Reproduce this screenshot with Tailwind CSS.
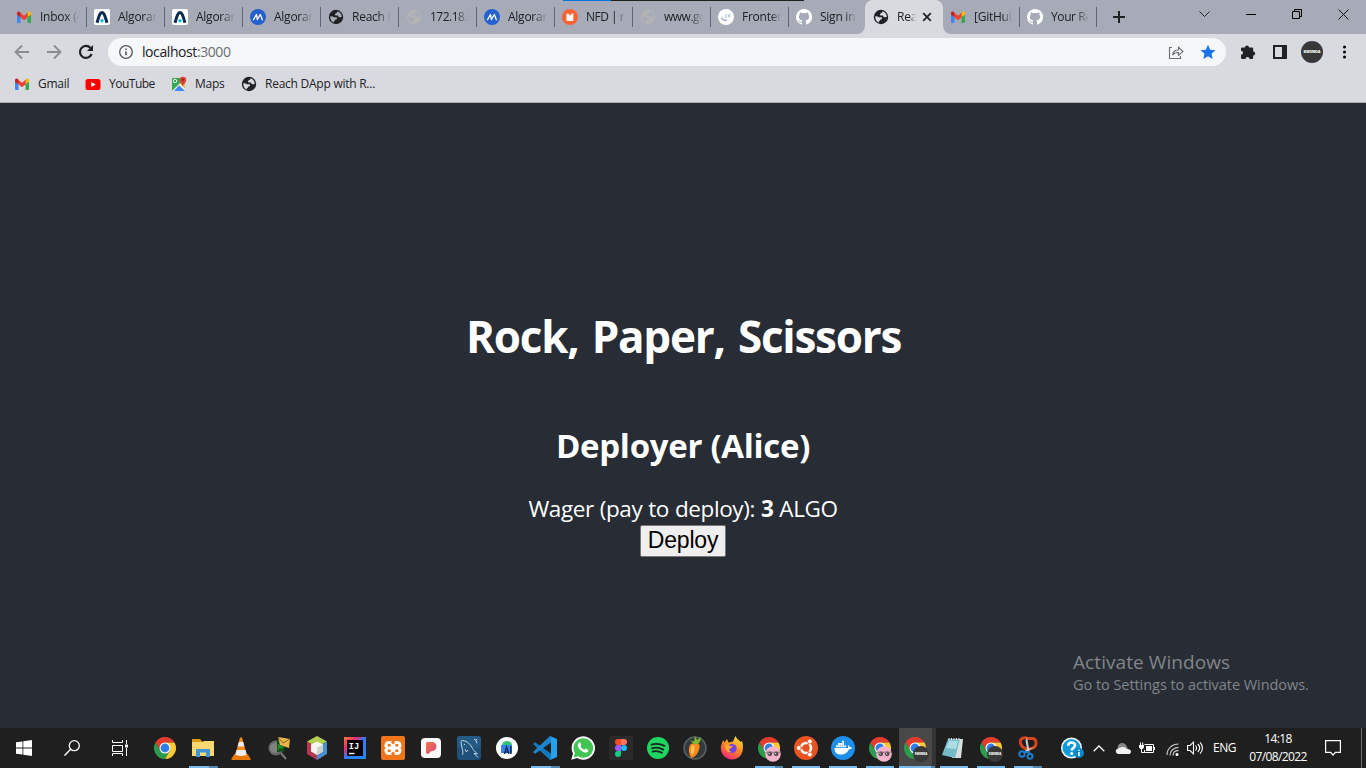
<!DOCTYPE html>
<html lang="en">
<head>
<meta charset="utf-8">
<title>Reach DApp with React</title>
<script src="https://cdn.jsdelivr.net/npm/@tailwindcss/browser@4"></script>
</head>
<body class="w-[1366px] h-[768px] overflow-hidden flex flex-col bg-[#282c34] font-['Open_Sans',sans-serif] text-[#202124]">

<svg class="hidden">
  <symbol id="gmail" viewBox="0 0 16 12"><path fill="#4285f4" d="M1 2v9a1 1 0 0 0 1 1h2.500V5z"/><path fill="#34a853" d="M15 2v9a1 1 0 0 1-1 1h-2.500V5z"/><path fill="#ea4335" d="M4 1.600 8 4.800l4-3.200V6L8 9.200 4 6z"/><path fill="#c5221f" d="M1 2.200C1 .6 2.800 0 4.300 1.300V6L1 3.700z"/><path fill="#fbbc04" d="M15 2.200C15 .6 13.200 0 11.700 1.300V6L15 3.700z"/></symbol>
  <symbol id="globe" viewBox="0 0 16 16"><circle cx="8" cy="8" r="7.200" fill="currentColor"/><path fill="var(--land)" d="M2.300 7.300C3.500 7 5 7.300 6 8.200h2.300c1 .2 1 1.800 0 2.200l-1 .2c-.2 1-.5 1.600-1.500 1.800v1.300C3.600 12.800 2 10.500 2.300 7.300zM9.300 2.300C9.600 3.500 9 4 7.800 4.200 7 4.500 6.700 6 7.500 6.500h2.300c.6 1.500 1.500 2 2.200 1.800l1.800-.3c0-2.800-1.800-5-4.500-5.700z"/></symbol>
  <symbol id="algo" viewBox="0 0 16 16"><rect width="16" height="16" rx="2" fill="#fff"/><path d="M3 13.800C4.500 9 5.500 3.500 8 3.500s3.500 5.500 5 10.300" fill="none" stroke="#0d2a4f" stroke-width="3"/><circle cx="8" cy="11.700" r="1.700" fill="#18b6e8"/></symbol>
  <symbol id="myalgo" viewBox="0 0 16 16"><circle cx="8" cy="8" r="8" fill="#2560cf"/><path d="M3.500 10.800 6.500 5.500l.9 5 2.900-5 2 5.300M7.300 10.600l1-1.700" fill="none" stroke="#fff" stroke-width="1.300" stroke-linejoin="round" stroke-linecap="round"/></symbol>
  <symbol id="github" viewBox="0 0 16 16"><path fill="#fff" d="M8 0a8 8 0 0 0-2.530 15.590c.4.070.550-.170.550-.380v-1.490C3.800 14.200 3.330 12.800 3.330 12.800c-.360-.920-.890-1.170-.890-1.170-.730-.500.050-.490.050-.490.800.060 1.230.820 1.230.820.710 1.220 1.870.870 2.330.660.070-.520.280-.870.510-1.070-1.780-.200-3.640-.890-3.640-3.950 0-.870.310-1.590.820-2.150-.080-.200-.360-1.020.080-2.120 0 0 .670-.210 2.200.820a7.600 7.600 0 0 1 4 0c1.530-1.040 2.200-.820 2.200-.820.440 1.100.160 1.920.080 2.120.510.560.820 1.270.820 2.150 0 3.070-1.870 3.750-3.650 3.950.290.250.540.730.540 1.480v2.200c0 .210.150.460.550.380A8 8 0 0 0 8 0z"/></symbol>
  <symbol id="chrome" viewBox="0 0 24 24"><path fill="#e33b2e" d="M2.470 6.500A11 11 0 0 1 21.530 6.500H12L7.240 14.750z"/><path fill="#2b9c4a" d="M2.470 6.500 7.240 14.750 12 17.500l4.760-2.750L12 23A11 11 0 0 1 2.470 6.500z"/><path fill="#fcc934" d="M21.530 6.500A11 11 0 0 1 12 23l4.760-8.250L12 6.500z"/><circle cx="12" cy="12" r="5.500" fill="#fff"/><circle cx="12" cy="12" r="4.400" fill="#2f7de9"/></symbol>
  <symbol id="pinkface" viewBox="0 0 16 16"><circle cx="8" cy="8" r="7.800" fill="#f4b3cd"/><circle cx="4.800" cy="7.800" r="2.400" fill="#54474c"/><circle cx="11.200" cy="7.800" r="2.400" fill="#54474c"/><path d="M3.500 6.500l1 2M10 6.500l1 2" stroke="#ddd" stroke-width="1"/><path d="M1 6.200h14" stroke="#76636b" stroke-width=".8"/></symbol>
  <symbol id="avatar" viewBox="0 0 22 22"><circle cx="11" cy="11" r="11" fill="#383838"/><text x="11" y="11.800" text-anchor="middle" font-size="4.200" font-weight="800" fill="#fff" textLength="17" lengthAdjust="spacingAndGlyphs">KWENDA</text></symbol>
</svg>

<!-- Tab strip -->
<div class="relative h-[34px] shrink-0 bg-[#a6abb7] flex text-[12px] leading-[34px] tracking-[-0.25px] pl-2">
  <div class="absolute top-0 left-[563px] w-[48px] h-px bg-[#0078d7]"></div>
  <div class="absolute top-0 left-[611px] w-[193px] h-px bg-[#1f1f1f]"></div>

  <div class="w-[78px] shrink-0 flex items-center pl-2"><svg class="w-4 h-3 shrink-0"><use href="#gmail"/></svg><span class="ml-2 w-[39px] overflow-hidden whitespace-nowrap mask-r-from-65%">Inbox (4</span><i class="ml-auto -mr-px z-10 w-px h-5 bg-[#63666e]"></i></div>
  <div class="w-[78px] shrink-0 flex items-center pl-2"><svg class="w-4 h-4 shrink-0"><use href="#algo"/></svg><span class="ml-2 w-[39px] overflow-hidden whitespace-nowrap mask-r-from-65%">Algorand</span><i class="ml-auto -mr-px z-10 w-px h-5 bg-[#63666e]"></i></div>
  <div class="w-[78px] shrink-0 flex items-center pl-2"><svg class="w-4 h-4 shrink-0"><use href="#algo"/></svg><span class="ml-2 w-[39px] overflow-hidden whitespace-nowrap mask-r-from-65%">Algorand</span><i class="ml-auto -mr-px z-10 w-px h-5 bg-[#63666e]"></i></div>
  <div class="w-[78px] shrink-0 flex items-center pl-2"><svg class="w-4 h-4 shrink-0"><use href="#myalgo"/></svg><span class="ml-2 w-[39px] overflow-hidden whitespace-nowrap mask-r-from-65%">Algorand</span><i class="ml-auto -mr-px z-10 w-px h-5 bg-[#63666e]"></i></div>
  <div class="w-[78px] shrink-0 flex items-center pl-2"><svg class="w-4 h-4 shrink-0 [--land:#a6abb7]"><use href="#globe"/></svg><span class="ml-2 w-[39px] overflow-hidden whitespace-nowrap mask-r-from-65%">Reach D</span><i class="ml-auto -mr-px z-10 w-px h-5 bg-[#63666e]"></i></div>
  <div class="w-[78px] shrink-0 flex items-center pl-2"><svg class="w-4 h-4 shrink-0 text-[#b4b4b5] [--land:#a6abb7]"><use href="#globe"/></svg><span class="ml-2 w-[39px] overflow-hidden whitespace-nowrap mask-r-from-65% tracking-[-0.5px]">172.18.0</span><i class="ml-auto -mr-px z-10 w-px h-5 bg-[#63666e]"></i></div>
  <div class="w-[78px] shrink-0 flex items-center pl-2"><svg class="w-4 h-4 shrink-0"><use href="#myalgo"/></svg><span class="ml-2 w-[39px] overflow-hidden whitespace-nowrap mask-r-from-65%">Algorand</span><i class="ml-auto -mr-px z-10 w-px h-5 bg-[#63666e]"></i></div>
  <div class="w-[78px] shrink-0 flex items-center pl-2"><svg class="w-4 h-4 shrink-0" viewBox="0 0 16 16"><circle cx="8" cy="8" r="8" fill="#fb6232"/><path fill="#fff" d="M4.500 5l1.500-.7L8.500 7V5.600l2.800-1.300V12H4.500z"/></svg><span class="ml-2 w-[39px] overflow-hidden whitespace-nowrap mask-r-from-75% tracking-[-0.5px]">NFD | m</span><i class="ml-auto -mr-px z-10 w-px h-5 bg-[#63666e]"></i></div>
  <div class="w-[78px] shrink-0 flex items-center pl-2"><svg class="w-4 h-4 shrink-0 text-[#b4b4b5] [--land:#a6abb7]"><use href="#globe"/></svg><span class="ml-2 w-[39px] overflow-hidden whitespace-nowrap mask-r-from-65% tracking-[-0.5px]">www.go</span><i class="ml-auto -mr-px z-10 w-px h-5 bg-[#63666e]"></i></div>
  <div class="w-[78px] shrink-0 flex items-center pl-2"><svg class="w-4 h-4 shrink-0" viewBox="0 0 16 16"><circle cx="8" cy="8" r="8" fill="#fff"/><path d="M3.500 8.500c.5 2.500 3 3.300 5.500 2.500" fill="none" stroke="#8b8fc4" stroke-width="1.200"/><path d="M8 4.500V9M10 5l2 3M12 5l-2 3" stroke="#9cc7cf" stroke-width="1"/></svg><span class="ml-2 w-[39px] overflow-hidden whitespace-nowrap mask-r-from-75%">Frontend</span><i class="ml-auto -mr-px z-10 w-px h-5 bg-[#63666e]"></i></div>
  <div class="w-[78px] shrink-0 flex items-center pl-2"><svg class="w-4 h-4 shrink-0"><use href="#github"/></svg><span class="ml-2 w-[37px] overflow-hidden whitespace-nowrap mask-r-from-65%">Sign in t</span></div>
  <div class="relative w-[78px] -ml-px shrink-0 flex items-center pl-2 rounded-t-lg bg-[#d9dae0]">
    <svg class="absolute -left-2 bottom-0 w-2 h-2" viewBox="0 0 8 8"><path fill="#d9dae0" d="M8 0v8H0a8 8 0 0 0 8-8z"/></svg>
    <svg class="absolute -right-2 bottom-0 w-2 h-2" viewBox="0 0 8 8"><path fill="#d9dae0" d="M0 0v8h8a8 8 0 0 1-8-8z"/></svg>
    <svg class="w-4 h-4 shrink-0 [--land:#d9dae0]"><use href="#globe"/></svg><span class="ml-2 w-[19px] overflow-hidden whitespace-nowrap mask-r-from-65%">Reac</span>
    <svg class="ml-[6px] w-[10px] h-[10px]" viewBox="0 0 10 10"><path d="M1.200 1.200l7.600 7.600M8.800 1.200 1.200 8.800" stroke="#202124" stroke-width="1.700"/></svg>
  </div>
  <div class="w-[76px] shrink-0 flex items-center pl-[7px]"><svg class="w-4 h-3 shrink-0"><use href="#gmail"/></svg><span class="ml-2 w-[38px] overflow-hidden whitespace-nowrap mask-r-from-75%">[GitHub]</span><i class="ml-auto -mr-px z-10 w-px h-5 bg-[#63666e]"></i></div>
  <div class="w-[77px] shrink-0 flex items-center pl-2"><svg class="w-4 h-4 shrink-0"><use href="#github"/></svg><span class="ml-2 w-[38px] overflow-hidden whitespace-nowrap mask-r-from-65% tracking-[-0.4px]">Your Re</span><i class="ml-auto -mr-px z-10 w-px h-5 bg-[#63666e]"></i></div>
  <svg class="ml-[17px] mt-[11px] w-3 h-3" viewBox="0 0 12 12"><path d="M6 0v12M0 6h12" stroke="#202124" stroke-width="2"/></svg>
  <div class="ml-auto flex mr-[17px] pt-[9px]">
    <svg class="w-[11px] h-[11px]" viewBox="0 0 11 11"><path d="M.5 2.500l5 5 5-5" fill="none" stroke="#202124"/></svg>
    <svg class="ml-9 w-[10px] h-[11px]" viewBox="0 0 10 11"><path d="M0 5.500h10" stroke="#000"/></svg>
    <svg class="ml-9 w-[10px] h-[10px]" viewBox="0 0 10 10"><path d="M.5 2.500h7v7h-7zM2.500 2.500v-2h7v7h-2" fill="none" stroke="#000"/></svg>
    <svg class="ml-9 w-[11px] h-[11px]" viewBox="0 0 11 11"><path d="M.5.5l10 10M10.500.5l-10 10" stroke="#111"/></svg>
  </div>
</div>

<!-- Toolbar -->
<div class="h-9 shrink-0 bg-[#d9dae0] flex items-center pl-[14px]">
  <svg class="w-4 h-4" viewBox="0 0 16 16"><path d="M15 8H2M8 1.500 1.500 8 8 14.500" fill="none" stroke="#8b8c90" stroke-width="1.800"/></svg>
  <svg class="ml-4 w-4 h-4" viewBox="0 0 16 16"><path d="M1 8h13M8 1.500 14.500 8 8 14.500" fill="none" stroke="#8b8c90" stroke-width="1.800"/></svg>
  <svg class="ml-4 w-4 h-4" viewBox="0 0 16 16"><path d="M13.600 10A6 6 0 1 1 12.500 4" fill="none" stroke="#202124" stroke-width="2.200"/><path d="M15 1v6H9z" fill="#202124"/></svg>
  <div class="ml-[14px] w-[1118px] h-7 rounded-full bg-[#f5f7f9] flex items-center pl-[11px] pr-[10px] text-[14px]">
    <svg class="w-[14px] h-[14px]" viewBox="0 0 14 14"><circle cx="7" cy="7" r="6.300" fill="none" stroke="#55585d" stroke-width="1.300"/><path d="M7 6.200v4M7 3.500v1.400" stroke="#55585d" stroke-width="1.500"/></svg>
    <span class="ml-[9px] pb-0.5 tracking-[-0.42px]">localhost<span class="text-[#6a6e74]">:3000</span></span>
    <svg class="ml-auto w-4 h-4" viewBox="0 0 16 16"><path d="M4 3.500H1.500v11h11V12M4.500 11c.5-3.500 2.500-5 6-5V3.200L15 7.500l-4.500 3.800V8.500c-3 0-4.800.7-6 2.500z" fill="none" stroke="#6a6c70" stroke-width="1.100"/></svg>
    <svg class="ml-4 w-4 h-4" viewBox="0 0 16 16"><path fill="#1a73e8" d="M8 .8l2.200 4.900 5.300.5-4 3.600 1.200 5.200L8 12.200 3.300 15l1.200-5.200-4-3.600 5.300-.5z"/></svg>
  </div>
  <svg class="ml-[14px] w-4 h-4" viewBox="0 0 16 16"><path fill="#202124" d="M5 3.500a2 2 0 0 1 4 0h3A1.200 1.200 0 0 1 13.200 4.700V7.500a2 2 0 0 1 0 4v2.300A1.200 1.200 0 0 1 12 15H9.500a2 2 0 0 0-4 0H2.200A1.200 1.200 0 0 1 1 13.800v-3a2 2 0 0 0 0-4V4.700A1.200 1.200 0 0 1 2.200 3.500z"/></svg>
  <svg class="ml-[17px] w-[14px] h-[14px]" viewBox="0 0 14 14"><path d="M1 1h12v12H1z" fill="none" stroke="#202124" stroke-width="2"/><path d="M9 0h5v14H9z" fill="#202124"/></svg>
  <svg class="ml-[14px] w-[22px] h-[22px]"><use href="#avatar"/></svg>
  <svg class="ml-5 w-1 h-[14px]" viewBox="0 0 4 14"><circle cx="1.500" cy="2" r="1.500"/><circle cx="1.500" cy="7" r="1.500"/><circle cx="1.500" cy="12" r="1.500"/></svg>
</div>

<!-- Bookmarks -->
<div class="h-[33px] shrink-0 bg-[#d9dae0] border-b border-[#a9abb0] flex items-center pl-[14px] pb-1 text-[12px] tracking-[-0.25px]">
  <svg class="w-4 h-3"><use href="#gmail"/></svg><span class="ml-2 w-[31px] whitespace-nowrap">Gmail</span>
  <svg class="ml-4 w-4 h-[11px]" viewBox="0 0 16 11"><rect width="15" height="11" x=".5" rx="2.600" fill="#f00"/><path d="M6.300 3v5L10.700 5.500z" fill="#fff"/></svg><span class="ml-2 w-[46px] whitespace-nowrap tracking-[-0.5px]">YouTube</span>
  <svg class="ml-4 w-4 h-4" viewBox="0 0 16 16"><rect x="1" y="2" width="13" height="13" rx="1" fill="#34a853"/><path d="M1 15 9 7l5 5v3z" fill="#e8eaed"/><path d="M3 15l5-5.500 6 5.500z" fill="#4285f4"/><path d="M9 7l5 5V4z" fill="#fbc02d"/><circle cx="4" cy="5" r="1.700" fill="none" stroke="#fff" stroke-width=".9"/><path d="M11.700 10.500c-.3-2.500-3-3.500-3-6.500a3 3 0 0 1 6.500 0c0 3-3 4-3.500 6.500z" fill="#e34133"/><circle cx="12" cy="3.800" r="1.100" fill="#8e1f17"/></svg><span class="ml-2 w-[29px] whitespace-nowrap">Maps</span>
  <svg class="ml-[17px] w-4 h-4 [--land:#d9dae0]"><use href="#globe"/></svg><span class="ml-2 whitespace-nowrap">Reach DApp with R...</span>
</div>

<!-- Page -->
<main class="relative flex-1 bg-[#282c34] text-white flex flex-col items-center">
  <h1 class="mt-[204px] -mr-px text-[44px] leading-[59px] font-bold tracking-[-1.25px] [word-spacing:3px] whitespace-nowrap">Rock, Paper, Scissors</h1>
  <h2 class="mt-[58px] text-[33px] leading-[44px] font-bold tracking-[-0.3px] whitespace-nowrap">Deployer (Alice)</h2>
  <p class="mt-[26px] text-[22.5px] leading-[30px] tracking-[-0.4px] [word-spacing:0.5px] whitespace-nowrap">Wager (pay to deploy): <b>3</b> ALGO</p>
  <button class="mt-px w-[86px] h-8 pb-0.5 border border-[#767676] rounded-[2px] bg-[#efefef] text-black font-['Liberation_Sans',sans-serif] text-[23px] leading-[28px] tracking-[-0.2px]">Deploy</button>
  <div class="absolute left-[1073px] top-[545px] text-[#82858a] whitespace-nowrap">
    <div class="text-[19px] leading-[28px] tracking-[0.08px]">Activate Windows</div>
    <div class="text-[14.500px] leading-[18px] tracking-[-0.05px]">Go to Settings to activate Windows.</div>
  </div>
</main>

<!-- Taskbar -->
<footer class="h-10 shrink-0 bg-[#1f1f1f] text-white flex items-center">
  <div class="w-12 flex justify-center"><svg class="w-4 h-4" viewBox="0 0 16 16"><path fill="#fff" d="M0 2.300 6.500 1.400v6.200H0zM7.300 1.300 16 0v7.600H7.300zM0 8.400h6.500v6.200L0 13.700zM7.300 8.400H16V16l-8.700-1.300z"/></svg></div>
  <div class="w-12 flex justify-center"><svg class="w-4 h-4" viewBox="0 0 16 16"><circle cx="10.300" cy="5.700" r="5" fill="none" stroke="#fff" stroke-width="1.300"/><path d="M6.700 9.300.5 15.500" stroke="#fff" stroke-width="1.400"/></svg></div>
  <div class="w-[50px] pl-4"><svg class="w-4 h-4" viewBox="0 0 16 16"><path d="M.5 0v2.500h10V0M.5 5.500h10v6H.5zM.5 16v-2.500h10V16M14.500 0v4M14.500 8v8" fill="none" stroke="#fff"/><path fill="#fff" d="M13 4.500h3v3h-3z"/></svg></div>

  <div class="w-[38px] flex justify-center"><svg class="w-6 h-6"><use href="#chrome"/></svg></div>
  <div class="relative w-[38px] h-10 flex items-center justify-center"><svg class="w-[22px] h-5" viewBox="0 0 22 20"><path fill="#d99b12" d="M0 1h8l2 2v5H0z"/><path fill="#fbd770" d="M0 4h10l2-1h10v15H0z"/><path fill="#3f95d6" d="M4 11h14v8h-4v-4.500H8V19H4z"/></svg><i class="absolute bottom-0 left-[5px] w-5 h-[2px] bg-[#76b9ed]"></i><i class="absolute bottom-0 left-[25px] w-[9px] h-[2px] bg-[#5287ae]"></i></div>
  <div class="w-[38px] flex justify-center"><svg class="w-5 h-[23px]" viewBox="0 0 20 23"><path fill="#e87909" d="M3.500 17h13l3 4.500v1.500H.5v-1.500z"/><path fill="#f58a18" d="M9 .5h2L16 19H4z"/><path fill="#eee" d="M7.800 5h4.400l1.200 4.500H6.600zM5.500 13h9l1.200 4.300C13 19.500 7 19.500 4.300 17.300z"/></svg></div>
  <div class="w-[38px] flex justify-center"><svg class="w-[22px] h-6" viewBox="0 0 22 24"><path d="M12 16l6 7" stroke="#777" stroke-width="2"/><circle cx="8" cy="12" r="7.500" fill="#666966"/><circle cx="7" cy="12" r="5" fill="#7f827e"/><path fill="#0c4d12" d="M9 5l6 1 2 9-8 1z"/><path d="M10 8l4 5M13 7l-3 7M9 11h7" stroke="#25a52f"/><path fill="#e7b64b" d="M10 1l12 2-1 9-9-3z"/><path d="M10 1l5 6 7-4" fill="none" stroke="#8b671f"/></svg></div>
  <div class="w-[38px] flex justify-center"><svg class="w-[22px] h-6" viewBox="0 0 22 24"><path fill="#b4cf4f" d="M11 0l10 5.500-10 6L1 5.500z"/><path fill="#b83650" d="M1 5.500l10 6V24L1 18z"/><path fill="#4a8fce" d="M21 5.500l-10 6V24l10-6z"/><path fill="#f7f5ed" d="M11 5.500l6 3v7l-6 3.500-6-3.500v-7z"/><path fill="#cfd2cc" d="M11 11.500l6-3v7L11 19z"/></svg></div>
  <div class="w-[38px] flex justify-center"><svg class="w-[22px] h-[22px]" viewBox="0 0 22 22"><defs><linearGradient id="ij" x1="0" y1="0" x2="1" y2="1"><stop offset="0" stop-color="#fb7a2b"/><stop offset=".3" stop-color="#ed2a75"/><stop offset=".5" stop-color="#2f7bf5"/><stop offset="1" stop-color="#2389f2"/></linearGradient></defs><rect width="22" height="22" fill="url(#ij)"/><rect x="3" y="3" width="16" height="16" fill="#090208"/><path d="M5 16.500h5.500" stroke="#fff" stroke-width="1.400"/><text x="4.800" y="11.500" font-size="8.500" font-weight="bold" fill="#fff" font-family="Liberation Mono, monospace">IJ</text></svg></div>
  <div class="w-[38px] flex justify-center"><svg class="w-6 h-6" viewBox="0 0 24 24"><rect width="24" height="24" rx="2" fill="#f0751a"/><rect x="3.500" y="5" width="17" height="14" rx="4.500" fill="#fff"/><path fill="#f0751a" d="M12 3.500l2 3-2 2-2-2zM12 20.500l2-3-2-2-2 2zM2.800 10.500 5 12l-2.200 1.500zM21.200 10.500 19 12l2.200 1.500z"/><rect x="6.500" y="8" width="3.300" height="2.600" rx="1.200" fill="#f0751a"/><rect x="14.200" y="8" width="3.300" height="2.600" rx="1.200" fill="#f0751a"/><rect x="6.500" y="13.500" width="3.300" height="2.600" rx="1.200" fill="#f0751a"/><rect x="14.200" y="13.500" width="3.300" height="2.600" rx="1.200" fill="#f0751a"/></svg></div>
  <div class="w-[38px] flex justify-center"><svg class="w-5 h-5" viewBox="0 0 20 20"><defs><linearGradient id="pw" x1="0" y1="0" x2="1" y2="1"><stop offset="0" stop-color="#f3764d"/><stop offset="1" stop-color="#d9457c"/></linearGradient></defs><rect width="20" height="20" rx="4" fill="#faf8f8"/><path fill="url(#pw)" d="M5 5.500C5 4.500 5.500 4 6.500 4H11a4.500 4.500 0 0 1 0 9c-2.500 0-2.300 3-4 3-1.200 0-2-.8-2-2z"/></svg></div>
  <div class="w-[38px] flex justify-center"><svg class="w-6 h-6" viewBox="0 0 24 24"><rect width="24" height="24" rx="3" fill="#1d4f78"/><rect width="24" height="12" rx="3" fill="#245b85"/><path d="M5.500 19C7 16 4.500 12 4.500 9 4 6 3.500 4.500 5.500 4.500c5 .5 8 4 10 8 1.500 3 3.500 3.500 5 5.500l-3.500-.5 4 4M7 8l1 1M8 13l1.500 3 1.500-2M17 3l2 1.500 1 3M20 3l-1 1.500" fill="none" stroke="#d3dfe9" stroke-width=".9"/></svg></div>
  <div class="w-[38px] flex justify-center"><svg class="w-[22px] h-[22px]" viewBox="0 0 22 22"><circle cx="11" cy="11" r="11" fill="#fff"/><path fill="#32c474" d="M6 8a5 4 0 0 1 10 0z"/><path fill="#3c82ef" d="M5 8h11v8H5z"/><path d="M8.500 17 10.500 10l2.300 7M9.500 15h3M14.800 9v8" fill="none" stroke="#12315f" stroke-width="1.500"/></svg></div>
  <div class="relative w-[38px] h-10 flex items-center justify-center"><svg class="w-6 h-6" viewBox="0 0 24 24"><path fill="#1478be" d="M0 8l2-1.700L18 17.500V24h-1z"/><path fill="#1d86cf" d="M0 16l2 1.700L18 6.500V0h-1z"/><path fill="#249fea" d="M17 0l7 3v18l-7 3c.7-.5 1-1 1-2V2c0-1-.3-1.500-1-2z"/></svg><i class="absolute bottom-0 left-[5px] w-5 h-[2px] bg-[#76b9ed]"></i><i class="absolute bottom-0 left-[25px] w-[9px] h-[2px] bg-[#5287ae]"></i></div>
  <div class="w-[38px] flex justify-center"><svg class="w-6 h-6" viewBox="0 0 24 24"><path fill="#fff" d="M.3 23.700 2 17.500A11.700 11.700 0 1 1 6.300 22z"/><path fill="#41c452" d="M2.600 21.400 3.900 17A9.800 9.800 0 1 1 7 20.200z"/><path fill="#fff" d="M8.200 6.500c.4-.3 1-.3 1.200.2l.9 2c.2.5-.6 1.100-.8 1.500.8 1.700 2.200 2.900 4 3.600.4-.2 1-1.300 1.400-1.200l2.200 1.100c.4.200.2 1.300-.1 1.800-1 1.400-2.700 1.300-4.200.7-2.600-1-4.500-2.800-5.700-5.200-.6-1.500-.3-3.400 1.100-4.500z"/></svg></div>
  <div class="w-[38px] flex justify-center"><svg class="w-6 h-6" viewBox="0 0 24 24"><rect width="24" height="24" rx="2" fill="#2a2a2a"/><path fill="#f24e1e" d="M12 3H9a3 3 0 0 0 0 6h3z"/><path fill="#ff7262" d="M12 3h3a3 3 0 0 1 0 6h-3z"/><path fill="#a259ff" d="M12 9H9a3 3 0 0 0 0 6h3z"/><circle cx="15" cy="12" r="3" fill="#1abcfe"/><path fill="#0acf83" d="M12 15H9a3 3 0 1 0 3 3z"/></svg></div>
  <div class="w-[37px] pl-[7px]"><svg class="w-[22px] h-[22px]" viewBox="0 0 22 22"><circle cx="11" cy="11" r="11" fill="#1ed760"/><path d="M4.500 7.700c4-1.200 9-.8 13 1.200M5 11.300c3.600-1 7.800-.6 11.300 1.300M5.500 14.600c3-.8 6.500-.5 9.500 1.200" fill="none" stroke="#1f1f1f" stroke-width="1.800" stroke-linecap="round"/></svg></div>
  <div class="w-[37px] pl-[6px]"><svg class="w-6 h-6" viewBox="0 0 24 24"><circle cx="12" cy="12" r="11" fill="#34393d" stroke="#596066" stroke-width="1.500"/><path fill="#f98a1a" d="M7 9c3-3 8-2 9.500 0 .5 5-3 12-8 13C6 20 5 12 7 9z"/><path fill="#ffc05a" d="M8.500 10c2-2 3-1 3 2s-1 6-2.500 7C7.500 17 7.500 13 8.500 10z"/><path fill="#7fb82a" d="M11 8 7 4.500l4 1L12 0l2 4 4-3-1 4.500-2 2.500z"/></svg></div>
  <div class="w-[37px] pl-[6px]"><svg class="w-6 h-6" viewBox="0 0 24 24"><defs><linearGradient id="ff" x1=".8" y1="0" x2=".3" y2="1"><stop offset="0" stop-color="#ffe63d"/><stop offset=".5" stop-color="#ff8a1f"/><stop offset="1" stop-color="#f0247d"/></linearGradient></defs><path fill="url(#ff)" d="M3 4l1.500 2.500L7 3l1.500 3.500L13 5.500 15.500 0c1 3 4 4.500 5 6l1.500-1c2.500 8 .5 18-10 18.500C4 23 0 16.500 1 10z"/><circle cx="12" cy="12.500" r="4.600" fill="#7542e5"/><path fill="#ffab28" d="M5 9c2-1 4-.5 5 1l3 .5-2.500 2C8 13 9 15.500 12 16c-4 1.500-7-2-7-7z"/></svg></div>
  <div class="relative w-[37px] h-10 flex items-center pl-[6px]"><svg class="w-6 h-6"><use href="#chrome"/></svg><svg class="absolute left-[14px] top-[18px] w-4 h-4"><use href="#pinkface"/></svg><i class="absolute bottom-0 left-1 w-5 h-[2px] bg-[#76b9ed]"></i><i class="absolute bottom-0 left-6 w-[8px] h-[2px] bg-[#5287ae]"></i></div>
  <div class="relative w-[37px] h-10 flex items-center pl-[6px]"><svg class="w-6 h-6" viewBox="0 0 24 24"><circle cx="12" cy="12" r="12" fill="#e95420"/><circle cx="12" cy="12" r="5" fill="none" stroke="#fff" stroke-width="2.600"/><path d="M12 12H2M12 12l4.500-8M12 12l4.500 8" stroke="#e95420" stroke-width="1.300"/><g fill="#fff" stroke="#e95420" stroke-width=".8"><circle cx="4.800" cy="12" r="2.400"/><circle cx="15.800" cy="5.500" r="2.400"/><circle cx="15.800" cy="18.500" r="2.400"/></g></svg><i class="absolute bottom-0 left-1 w-7 h-[2px] bg-[#76b9ed]"></i></div>
  <div class="relative w-[37px] h-10 flex items-center pl-[6px]"><svg class="w-6 h-6" viewBox="0 0 24 24"><circle cx="12" cy="12" r="12" fill="#1d8feb"/><path fill="#fff" d="M3.500 12H17c.3-1.500 0-2.500-.3-3 1.300.3 1.700 1.400 1.800 2 1 0 1.800.2 2.500.7-.7 1-1.600 1.500-3 1.500C16.500 17 13 18.500 9.500 18.500 5.500 18.500 3.300 16 3.500 12z"/><path d="M5 10.300h10M7 8h6M11 5.700h2" stroke="#fff" stroke-width="1.900" stroke-dasharray="1.900 .3"/></svg><i class="absolute bottom-0 left-1 w-7 h-[2px] bg-[#76b9ed]"></i></div>
  <div class="relative w-[37px] h-10 flex items-center pl-[6px]"><svg class="w-6 h-6"><use href="#chrome"/></svg><svg class="absolute left-[14px] top-[18px] w-4 h-4"><use href="#pinkface"/></svg><i class="absolute bottom-0 left-1 w-7 h-[2px] bg-[#76b9ed]"></i></div>
  <div class="relative w-[37px] h-10 flex items-center pl-1 bg-[#484848] border-r-4 border-[#343434]"><svg class="w-6 h-6"><use href="#chrome"/></svg><svg class="absolute left-[14px] top-[18px] w-4 h-4"><use href="#avatar"/></svg><i class="absolute bottom-0 left-0 w-8 h-[2px] bg-[#76b9ed]"></i><i class="absolute bottom-0 left-8 w-1 h-[2px] bg-[#5287ae]"></i></div>
  <div class="relative w-[37px] h-10 flex items-center pl-[5px]"><svg class="w-[23px] h-[22px]" viewBox="0 0 23 22"><path fill="#d8e0df" d="M16 2l6 0-2 19-9 0z"/><path fill="#77bbca" d="M7 2h12l-5 19-13-3z"/><path fill="#acdde4" d="M8 4h9l-2 8-10-1z"/><path d="M8 1v2M10.500 1v2M13 1v2M15.500 1v2M18 1v2" stroke="#eee"/></svg><i class="absolute bottom-0 left-1 w-7 h-[2px] bg-[#76b9ed]"></i></div>
  <div class="relative w-[37px] h-10 flex items-center pl-[6px]"><svg class="w-6 h-6"><use href="#chrome"/></svg><svg class="absolute left-[14px] top-[18px] w-4 h-4"><use href="#avatar"/></svg><i class="absolute bottom-0 left-1 w-7 h-[2px] bg-[#76b9ed]"></i></div>
  <div class="relative w-[37px] h-10 flex items-center pl-2"><svg class="w-5 h-6" viewBox="0 0 20 24"><path d="M10 2.500C4 0 1 4 3 8.500c1.500 4 7 6 13 3C19 9 19 2.500 14 2.500c-2 0-3 0-4 0" fill="none" stroke="#d6441c" stroke-width="3"/><path fill="#c9cccf" d="M9 1l2.500 14h-2L7.500 5zM17 11l-9 5-1-2z"/><circle cx="4" cy="18" r="2.700" fill="none" stroke="#1e7cc9" stroke-width="2"/><circle cx="12" cy="20.300" r="2.500" fill="none" stroke="#1e7cc9" stroke-width="2"/><path d="M5 16h6v3" fill="none" stroke="#1e7cc9" stroke-width="2"/></svg><i class="absolute bottom-0 left-1 w-[19px] h-[2px] bg-[#76b9ed]"></i><i class="absolute bottom-0 left-[23px] w-[9px] h-[2px] bg-[#5287ae]"></i></div>

  <svg class="ml-[14px] w-[23px] h-[22px]" viewBox="0 0 23 22"><circle cx="10.500" cy="11" r="10.500" fill="#f4fbff"/><circle cx="10.500" cy="11" r="9" fill="#109bd8"/><path d="M7.200 8.800c0-4.500 7-4.300 6.800-.3-.1 2.200-3.200 2.500-3.200 5" fill="none" stroke="#fff" stroke-width="2.500"/><circle cx="10.700" cy="16.500" r="1.500" fill="#fff"/><circle cx="18" cy="16" r="5" fill="#0b86c9"/><path d="M18 15v4M18 12.700v1.300" stroke="#fff" stroke-width="1.500"/></svg>
  <svg class="ml-[9px] w-3 h-[7px]" viewBox="0 0 12 7"><path d="M.7 6.300 6 1l5.300 5.300" fill="none" stroke="#fff" stroke-width="1.300"/></svg>
  <svg class="ml-[10px] w-4 h-[11px]" viewBox="0 0 16 11"><path fill="#8a8a8a" d="M3 6a4.500 4.500 0 0 1 8.500-3L13 6z"/><path fill="#f2f2f2" d="M3 11a2.800 2.800 0 0 1 0-5.500C5 5 6 4 8 4c2 0 3 .8 3.600 2 2.500-.3 4.400.8 4.400 2.700 0 1.500-1 2.300-2.500 2.300z"/></svg>
  <svg class="ml-2 w-4 h-3" viewBox="0 0 16 12"><path d="M5.500 2.500h9v8h-9V8" fill="none" stroke="#fff"/><path fill="#fff" d="M7 4h6v5H7zM15 5h1v3h-1zM0 3h5v2.500L3.500 7h-2L0 5.500zM1 .5h1V3H1zM3.200.5h1V3h-1z"/><path d="M2.500 6.500v4h3" fill="none" stroke="#fff"/></svg>
  <svg class="ml-[11px] mt-[3px] w-[14px] h-[13px]" viewBox="0 0 14 13"><path d="M1 12C1 5.500 6 1 12.500 1M4 12.500C4 8 7.500 4.500 12.500 4.300M7 12.500c0-3 2-5 5.500-5.200" fill="none" stroke="#c4c4c4" stroke-width="1.200"/><circle cx="11" cy="11.500" r="1.500" fill="#fff"/></svg>
  <svg class="ml-[7px] w-[17px] h-[14px]" viewBox="0 0 17 14"><path d="M.6 4.500h2.500L6.500 1.200v11.600L3.100 9.500H.6zM8.500 4.500c1.300 1.500 1.300 3.500 0 5M10.800 3c2.300 2.400 2.300 5.600 0 8M13 1.300c3.300 3.400 3.300 8 0 11.400" fill="none" stroke="#fff" stroke-width="1.100"/></svg>
  <span class="ml-[9px] w-6 text-[12px] tracking-[-0.5px]">ENG</span>
  <div class="ml-[11px] w-[60px] text-center text-[12px] leading-[18px] tracking-[-0.6px] whitespace-nowrap">14:18<br>07/08/2022</div>
  <svg class="ml-[17px] w-4 h-4" viewBox="0 0 16 16"><path d="M.6.600h14.800v11.800h-5L8 15l-2.400-2.600h-5z" fill="none" stroke="#fff" stroke-width="1.200"/></svg>
  <i class="ml-auto mr-1 w-px h-10 bg-[#696969]"></i>
</footer>
</body>
</html>
